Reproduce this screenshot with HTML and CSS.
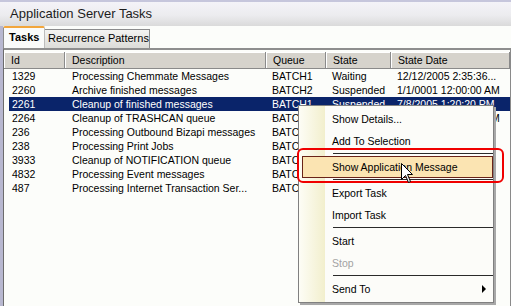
FILE: index.html
```html
<!DOCTYPE html>
<html lang="en">

<head>
    <meta charset="UTF-8" />
    <title>Application Server Tasks</title>
    <link rel="stylesheet" href="styles.css">
</head>

<body>
    <div class="window">
        <div class="titlebar">Application Server Tasks</div>

        <div class="content">
            <div class="tabstrip">
                <div class="tab active">Tasks</div>
                <div class="tab">Recurrence Patterns</div>
            </div>

            <div class="panel">
                <div class="list-header">
                    <div class="col">Id</div>
                    <div class="col">Description</div>
                    <div class="col">Queue</div>
                    <div class="col">State</div>
                    <div class="col">State Date</div>
                </div>

                <div class="row">
                    <div>1329</div><div>Processing Chemmate Messages</div><div>BATCH1</div><div>Waiting</div><div>12/12/2005 2:35:36...</div>
                </div>
                <div class="row">
                    <div>2260</div><div>Archive finished messages</div><div>BATCH2</div><div>Suspended</div><div>1/1/0001 12:00:00 AM</div>
                </div>
                <div class="row selected">
                    <div>2261</div><div>Cleanup of finished messages</div><div>BATCH1</div><div>Suspended</div><div>7/8/2005 1:20:20 PM</div>
                </div>
                <div class="row">
                    <div>2264</div><div>Cleanup of TRASHCAN queue</div><div>BATCH1</div><div>Waiting</div><div>1/1/0001 12:00:00 AM</div>
                </div>
                <div class="row">
                    <div>236</div><div>Processing Outbound Bizapi messages</div><div>BATCH1</div><div>Waiting</div><div>7/8/2005 3:10:42 PM</div>
                </div>
                <div class="row">
                    <div>238</div><div>Processing Print Jobs</div><div>BATCH1</div><div>Waiting</div><div>7/8/2005 3:11:05 PM</div>
                </div>
                <div class="row">
                    <div>3933</div><div>Cleanup of NOTIFICATION queue</div><div>BATCH1</div><div>Waiting</div><div>12/12/2005 2:35:...</div>
                </div>
                <div class="row">
                    <div>4832</div><div>Processing Event messages</div><div>BATCH1</div><div>Waiting</div><div>7/8/2005 3:12:19 PM</div>
                </div>
                <div class="row">
                    <div>487</div><div>Processing Internet Transaction Ser...</div><div>BATCH1</div><div>Waiting</div><div>7/8/2005 3:14:51 PM</div>
                </div>
            </div>
        </div>

        <div class="menu">
            <div class="item">Show Details...</div>
            <div class="item">Add To Selection</div>
            <div class="sep"></div>
            <div class="item hot">Show Application Message</div>
            <div class="sep"></div>
            <div class="item">Export Task</div>
            <div class="item">Import Task</div>
            <div class="sep"></div>
            <div class="item">Start</div>
            <div class="item disabled">Stop</div>
            <div class="sep"></div>
            <div class="item submenu">Send To<span class="arrow"></span></div>
        </div>

        <div class="callout"></div>

        <svg class="cursor" width="13" height="21" viewBox="0 0 13 21">
            <path d="M0.5 0.5 L0.5 16.5 L4.5 12.5 L7.5 19.5 L9.5 18.5 L6.5 11.5 L11.5 11.5 Z" fill="#fff" stroke="#000" stroke-width="1" />
        </svg>
    </div>
</body>

</html>
```

FILE: styles.css
```css
* {
    box-sizing: border-box;
}

body {
    margin: 0;
    font-family: "Liberation Sans", Arial, sans-serif;
    font-size: 11px;
    color: #000;
    background-color: #fcfdfa;
}

.window {
    position: relative;
    width: 511px;
    height: 306px;
    overflow: hidden;
    background-color: #fcfdfa;
}

.titlebar {
    height: 26px;
    border-top: 2px solid #c6c6dc;
    background: linear-gradient(#f4f3f8, #ececef 55%, #dadada);
    padding-left: 10px;
    font-size: 13px;
    line-height: 23px;
    color: #1c1c1c;
}

.content {
    height: 280px;
    border-left: 3px solid #b8b8d0;
}

.tabstrip {
    display: flex;
    align-items: flex-end;
    height: 22px;
}

.tab {
    height: 19px;
    width: 105px;
    padding-left: 3px;
    border: 1px solid #8c8c8c;
    border-bottom: none;
    border-left: none;
    background: linear-gradient(#f4f4f2, #dcdcd8);
    line-height: 17px;
    white-space: nowrap;
}

.tab.active {
    height: 22px;
    width: 42px;
    padding-left: 5px;
    border-left: 1px solid #8c8c8c;
    border-right: 1px solid #bdbdbd;
    border-top: 2px solid #f2a63c;
    border-radius: 2px 2px 0 0;
    background: #fafbfa;
    font-weight: bold;
    line-height: 19px;
}

.panel {
    height: 258px;
    border-top: 2px solid #8e8e8e;
    border-left: 1px solid #6c6c6c;
    border-right: 1px solid #8a8a8a;
    padding-top: 2px;
    font-size: 10.5px;
}

.list-header {
    display: grid;
    grid-template-columns: 61px 201px 60px 65px 1fr;
    height: 17px;
}

.list-header .col {
    background-color: #d6d3cc;
    border-right: 1px solid #8a8a8a;
    border-bottom: 1px solid #8a8a8a;
    box-shadow: inset 1px 1px 0 #ffffff;
    padding-left: 7px;
    line-height: 16px;
}

.row {
    display: grid;
    grid-template-columns: 56px 201px 60px 65px 1fr;
    height: 14px;
    margin-left: 5px;
    line-height: 14px;
    white-space: nowrap;
}

.row div {
    overflow: hidden;
    padding-left: 6px;
}

.row div:first-child {
    padding-left: 3px;
}

.row div:nth-child(2) {
    padding-left: 7px;
}

.row.selected {
    background-color: #0a246a;
    color: #ffffff;
}

.menu {
    position: absolute;
    left: 298px;
    top: 105px;
    width: 196px;
    padding: 2px 0;
    border: 1px solid #808080;
    background: linear-gradient(to right, #fdfdf6 0, #f2efcd 26px, #fcfcf9 26px);
    box-shadow: 2px 2px 0 #a8a8a8;
    font-size: 10.5px;
}

.item {
    height: 22px;
    padding-left: 33px;
    line-height: 22px;
}

.item.hot {
    margin-left: 3px;
    padding-left: 29px;
    border: 1px solid #6a2318;
    background-color: #fbe4b2;
    line-height: 20px;
}

.item.disabled {
    color: #a3a3a3;
}

.item.submenu {
    display: flex;
    justify-content: space-between;
    align-items: center;
    padding-right: 7px;
}

.arrow {
    width: 0;
    height: 0;
    border-left: 4px solid #000;
    border-top: 4px solid transparent;
    border-bottom: 4px solid transparent;
}

.sep {
    height: 4px;
    margin-left: 34px;
    padding-top: 1px;
}

.sep::after {
    content: "";
    display: block;
    height: 1px;
    background-color: #2a2a2a;
}

.callout {
    position: absolute;
    left: 297px;
    top: 148px;
    width: 207px;
    height: 35px;
    border: 2px solid #f00000;
    border-radius: 6px;
}

.cursor {
    position: absolute;
    left: 401px;
    top: 163px;
}
```
